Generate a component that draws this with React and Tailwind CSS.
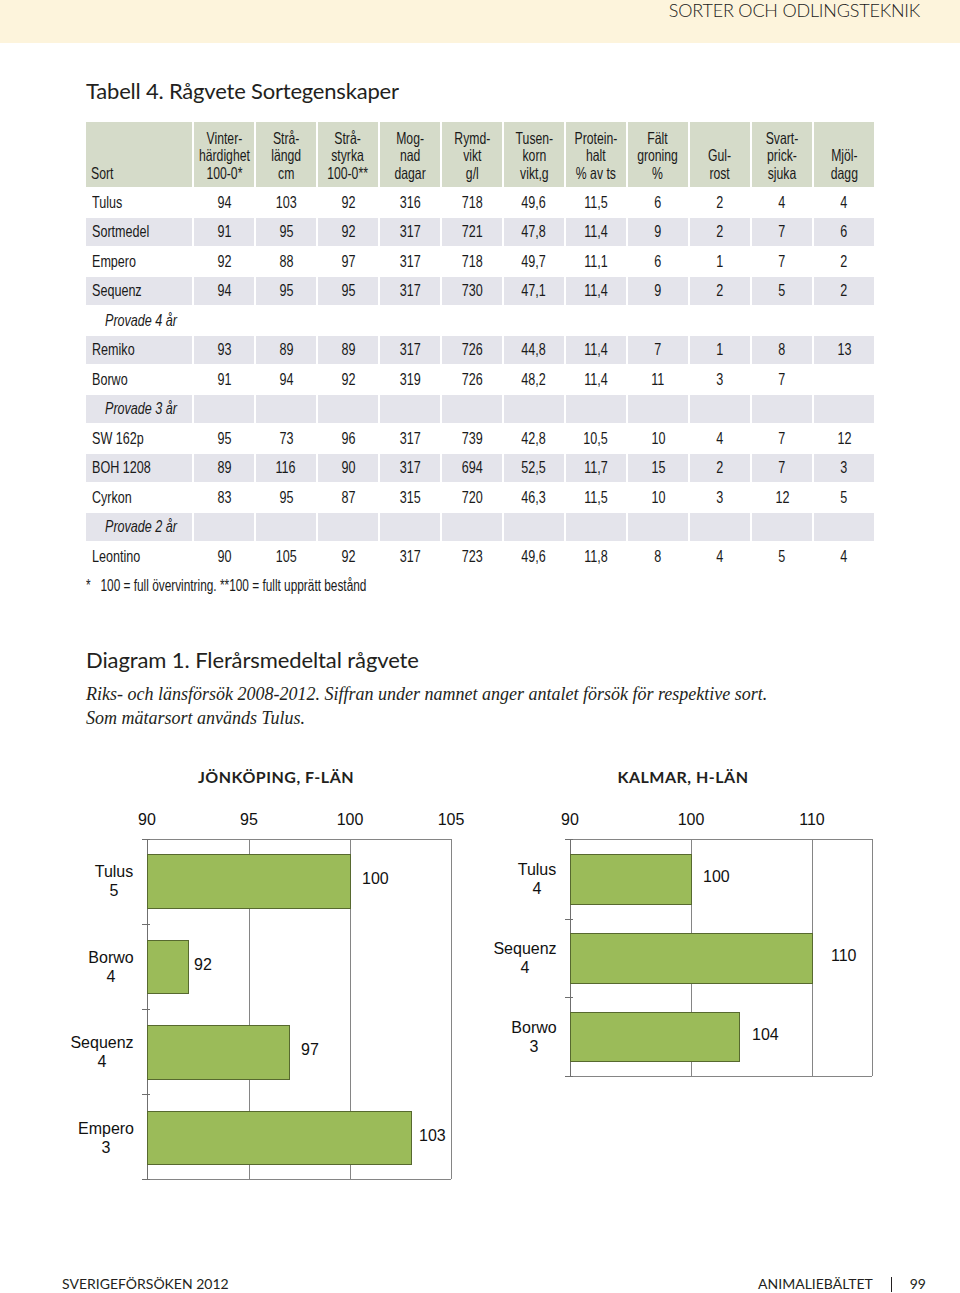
import React from 'react';

const heads = [
  ['Vinter-', 'härdighet', '100-0*'],
  ['Strå-', 'längd', 'cm'],
  ['Strå-', 'styrka', '100-0**'],
  ['Mog-', 'nad', 'dagar'],
  ['Rymd-', 'vikt', 'g/l'],
  ['Tusen-', 'korn', 'vikt,g'],
  ['Protein-', 'halt', '% av ts'],
  ['Fält', 'groning', '%'],
  ['Gul-', 'rost'],
  ['Svart-', 'prick-', 'sjuka'],
  ['Mjöl-', 'dagg'],
];

// group = kursiv mellanrubrik, shade = grå rad
const rows = [
  { name: 'Tulus', v: ['94', '103', '92', '316', '718', '49,6', '11,5', '6', '2', '4', '4'] },
  { name: 'Sortmedel', shade: true, v: ['91', '95', '92', '317', '721', '47,8', '11,4', '9', '2', '7', '6'] },
  { name: 'Empero', v: ['92', '88', '97', '317', '718', '49,7', '11,1', '6', '1', '7', '2'] },
  { name: 'Sequenz', shade: true, v: ['94', '95', '95', '317', '730', '47,1', '11,4', '9', '2', '5', '2'] },
  { name: 'Provade 4 år', group: true },
  { name: 'Remiko', shade: true, v: ['93', '89', '89', '317', '726', '44,8', '11,4', '7', '1', '8', '13'] },
  { name: 'Borwo', v: ['91', '94', '92', '319', '726', '48,2', '11,4', '11', '3', '7', ''] },
  { name: 'Provade 3 år', group: true, shade: true },
  { name: 'SW 162p', v: ['95', '73', '96', '317', '739', '42,8', '10,5', '10', '4', '7', '12'] },
  { name: 'BOH 1208', shade: true, v: ['89', '116', '90', '317', '694', '52,5', '11,7', '15', '2', '7', '3'] },
  { name: 'Cyrkon', v: ['83', '95', '87', '315', '720', '46,3', '11,5', '10', '3', '12', '5'] },
  { name: 'Provade 2 år', group: true, shade: true },
  { name: 'Leontino', v: ['90', '105', '92', '317', '723', '49,6', '11,8', '8', '4', '5', '4'] },
];

const leftChart = {
  w: 410,
  h: 390,
  plot: { l: 87, r: 391, t: 38, b: 378 },
  axis: [
    { x: 87, t: '90' },
    { x: 189, t: '95' },
    { x: 290, t: '100' },
    { x: 391, t: '105' },
  ],
  grid: [189, 290],
  ticks: [38, 123, 208, 293, 378],
  bars: [
    { y: 53, h: 54, x2: 290, val: '100', vx: 302, name: 'Tulus', n: '5', cx: 54 },
    { y: 139, h: 53, x2: 128, val: '92', vx: 134, name: 'Borwo', n: '4', cx: 51 },
    { y: 224, h: 54, x2: 229, val: '97', vx: 241, name: 'Sequenz', n: '4', cx: 42 },
    { y: 310, h: 53, x2: 351, val: '103', vx: 359, name: 'Empero', n: '3', cx: 46 },
  ],
};

const rightChart = {
  w: 420,
  h: 290,
  plot: { l: 90, r: 392, t: 38, b: 275 },
  axis: [
    { x: 90, t: '90' },
    { x: 211, t: '100' },
    { x: 332, t: '110' },
  ],
  grid: [211, 332],
  ticks: [38, 118, 196, 275],
  bars: [
    { y: 53, h: 50, x2: 211, val: '100', vx: 223, name: 'Tulus', n: '4', cx: 57 },
    { y: 132, h: 50, x2: 332, val: '110', vx: 351, name: 'Sequenz', n: '4', cx: 45 },
    { y: 211, h: 49, x2: 259, val: '104', vx: 272, name: 'Borwo', n: '3', cx: 54 },
  ],
};

function BarChart({ c }) {
  const { plot } = c;
  const font = 'Liberation Sans, Arial, sans-serif';
  return (
    <svg width={c.w} height={c.h} viewBox={`0 0 ${c.w} ${c.h}`} className="block">
      {c.axis.map((a) => (
        <text key={a.t} x={a.x} y={24} fontSize="16" fontFamily={font} textAnchor="middle" fill="#111">
          {a.t}
        </text>
      ))}
      {/* ram och stödlinjer */}
      <line x1={plot.l} y1={plot.t + 0.5} x2={plot.r} y2={plot.t + 0.5} stroke="#858585" />
      <line x1={plot.l} y1={plot.b + 0.5} x2={plot.r} y2={plot.b + 0.5} stroke="#858585" />
      <line x1={plot.r + 0.5} y1={plot.t} x2={plot.r + 0.5} y2={plot.b} stroke="#858585" />
      {c.grid.map((x) => (
        <line key={x} x1={x + 0.5} y1={plot.t} x2={x + 0.5} y2={plot.b} stroke="#858585" />
      ))}
      <line x1={plot.l + 0.5} y1={plot.t} x2={plot.l + 0.5} y2={plot.b + 1} stroke="#6f6f6f" />
      {c.ticks.map((y) => (
        <line key={y} x1={plot.l - 5} y1={y + 0.5} x2={plot.l + 3} y2={y + 0.5} stroke="#6f6f6f" />
      ))}
      {c.bars.map((b) => (
        <g key={b.name}>
          <rect x={plot.l + 0.5} y={b.y + 0.5} width={b.x2 - plot.l} height={b.h} fill="#9bbb59" stroke="#57692f" strokeWidth="1" />
          <text x={b.vx} y={b.y + b.h / 2 + 3} fontSize="16" fontFamily={font} fill="#111">
            {b.val}
          </text>
          <text x={b.cx} y={b.y + b.h / 2 - 4} fontSize="16" fontFamily={font} textAnchor="middle" fill="#111">
            {b.name}
          </text>
          <text x={b.cx} y={b.y + b.h / 2 + 15} fontSize="16" fontFamily={font} textAnchor="middle" fill="#111">
            {b.n}
          </text>
        </g>
      ))}
    </svg>
  );
}

// smal tabellstil: Arial-bredd ihoptryckt som en condensed-font
function Narrow({ children, left }) {
  return (
    <span className={`inline-block whitespace-nowrap scale-x-[0.74] ${left ? 'origin-left' : 'origin-center'}`}>
      {children}
    </span>
  );
}

export default function App() {
  return (
    <div className="w-[960px] h-[1293px] bg-white flex flex-col text-[#231f20] overflow-hidden">
      {/* sidhuvud */}
      <div className="h-[43px] bg-[#fdf4dc] flex justify-end pr-[40px]">
        <span className="font-['Lato',sans-serif] font-light text-[18px] leading-[21px] tracking-[-0.2px] text-[#1a1a1a]">
          SORTER OCH ODLINGSTEKNIK
        </span>
      </div>

      <h1 className="mt-[34px] ml-[86px] font-['Lato',sans-serif] text-[22px] leading-[28px] tracking-[-0.2px]">
        Tabell 4. Rågvete Sortegenskaper
      </h1>

      {/* tabell */}
      <div className="mt-[17px] ml-[86px] grid grid-cols-[106px_repeat(11,60px)] gap-x-[2px] gap-y-[1.5px] font-['Liberation_Sans',Arial,sans-serif] text-[#1a1a1a]">
        <div className="h-[65px] bg-[#d5dbc9] flex items-end pl-[5px] pb-[5px] text-[16.5px] leading-[17.5px]">
          <Narrow left>Sort</Narrow>
        </div>
        {heads.map((h, i) => (
          <div key={i} className="h-[65px] bg-[#d5dbc9] flex flex-col justify-end items-center pb-[5px] text-[16.5px] leading-[17.5px]">
            <span className="flex flex-col items-center whitespace-nowrap scale-x-[0.74] origin-center">
              {h.map((l) => (
                <span key={l}>{l}</span>
              ))}
            </span>
          </div>
        ))}
        {rows.map((r) => (
          <React.Fragment key={r.name}>
            <div
              className={`h-[28px] flex items-center text-[17px] leading-[20px] ${r.shade ? 'bg-[#e4e4eb]' : ''} ${
                r.group ? 'italic pl-[19px]' : 'pl-[6px]'
              }`}
            >
              <Narrow left>{r.name}</Narrow>
            </div>
            {(r.v || Array(11).fill('')).map((v, j) => (
              <div
                key={j}
                className={`h-[28px] flex items-center justify-center text-[17px] leading-[20px] ${r.shade ? 'bg-[#e4e4eb]' : ''}`}
              >
                <Narrow>{v}</Narrow>
              </div>
            ))}
          </React.Fragment>
        ))}
      </div>

      <p className="mt-[5px] ml-[86px] font-['Liberation_Sans',Arial,sans-serif] text-[16px] leading-[20px] text-[#1a1a1a]">
        <Narrow left>*&nbsp;&nbsp; 100 = full övervintring. **100 = fullt upprätt bestånd</Narrow>
      </p>

      <h2 className="mt-[50px] ml-[86px] font-['Lato',sans-serif] text-[22px] leading-[28px] tracking-[-0.1px]">
        Diagram 1. Flerårsmedeltal rågvete
      </h2>
      <p className="mt-[8px] ml-[86px] font-['Liberation_Serif',serif] italic text-[18px] leading-[24px]">
        Riks- och länsförsök 2008-2012. Siffran under namnet anger antalet försök för respektive sort.
        <br />
        Som mätarsort används Tulus.
      </p>

      {/* diagram */}
      <div className="mt-[37px] flex">
        <div className="ml-[60px] w-[410px]">
          <div className="pl-[22px] text-center font-['Lato',sans-serif] font-bold text-[16px] leading-[20px] tracking-[0.5px]">
            JÖNKÖPING, F-LÄN
          </div>
          <div className="mt-[14px]">
            <BarChart c={leftChart} />
          </div>
        </div>
        <div className="ml-[10px] w-[420px]">
          <div className="pr-[14px] text-center font-['Lato',sans-serif] font-bold text-[16px] leading-[20px] tracking-[0.5px]">
            KALMAR, H-LÄN
          </div>
          <div className="mt-[14px]">
            <BarChart c={rightChart} />
          </div>
        </div>
      </div>

      {/* sidfot */}
      <div className="mt-auto h-[18px] flex justify-between items-center pl-[62px] pr-[34px] font-['Lato',sans-serif] text-[14px] leading-[18px]">
        <span>SVERIGEFÖRSÖKEN 2012</span>
        <span className="flex items-center">
          ANIMALIEBÄLTET
          <span className="mx-[18px] inline-block w-[1px] h-[15px] bg-[#231f20]" />
          99
        </span>
      </div>
    </div>
  );
}
